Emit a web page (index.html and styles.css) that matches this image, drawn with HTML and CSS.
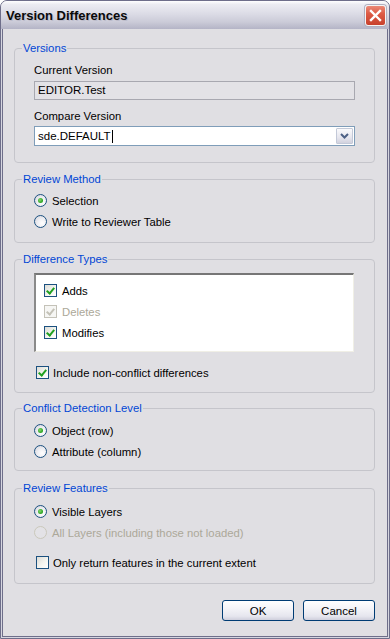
FILE: index.html
```html
<!DOCTYPE html>
<html lang="en">
<head>
    <meta charset="UTF-8">
    <meta name="viewport" content="width=device-width, initial-scale=1.0">
    <title>Version Differences</title>
    <link rel="stylesheet" href="styles.css">
</head>
<body>
    <div class="window">
        <div class="titlebar">
            <span class="title">Version Differences</span>
            <span class="close-btn">
                <svg width="13" height="13" viewBox="0 0 13 13"><path d="M2 2 L11 11 M11 2 L2 11" stroke="#fff" stroke-width="2.4" stroke-linecap="square"/></svg>
            </span>
        </div>
        <div class="client">
            <fieldset class="group group-versions">
                <legend>Versions</legend>
                <div class="label first">Current Version</div>
                <div class="textbox readonly">EDITOR.Test</div>
                <div class="label">Compare Version</div>
                <div class="combo">
                    <span class="combo-text">sde.DEFAULT<span class="caret"></span></span>
                    <span class="combo-btn">
                        <svg width="9" height="6" viewBox="0 0 9 6"><path d="M1 1 L4.5 4.5 L8 1" stroke="#4d6185" stroke-width="2" fill="none"/></svg>
                    </span>
                </div>
            </fieldset>

            <fieldset class="group group-method">
                <legend>Review Method</legend>
                <div class="row"><span class="radio checked"></span>Selection</div>
                <div class="row"><span class="radio"></span>Write to Reviewer Table</div>
            </fieldset>

            <fieldset class="group group-types">
                <legend>Difference Types</legend>
                <div class="listbox">
                    <div class="row item"><span class="check small on"></span>Adds</div>
                    <div class="row item disabled"><span class="check small on dis"></span>Deletes</div>
                    <div class="row item"><span class="check small on"></span>Modifies</div>
                </div>
                <div class="row include"><span class="check on"></span>Include non-conflict differences</div>
            </fieldset>

            <fieldset class="group group-conflict">
                <legend>Conflict Detection Level</legend>
                <div class="row"><span class="radio checked"></span>Object (row)</div>
                <div class="row"><span class="radio"></span>Attribute (column)</div>
            </fieldset>

            <fieldset class="group group-features">
                <legend>Review Features</legend>
                <div class="row"><span class="radio checked"></span>Visible Layers</div>
                <div class="row disabled"><span class="radio dis"></span>All Layers (including those not loaded)</div>
                <div class="row extent"><span class="check"></span>Only return features in the current extent</div>
            </fieldset>

            <div class="buttons">
                <span class="button">OK</span>
                <span class="button">Cancel</span>
            </div>
        </div>
    </div>
</body>
</html>
```

FILE: styles.css
```css
html, body {
    margin: 0;
    padding: 0;
    background: #ffffff;
}
body {
    font-family: "Liberation Sans", Arial, sans-serif;
    font-size: 11.3px;
    color: #000;
}
.window {
    width: 390px;
    height: 639px;
    box-sizing: border-box;
    display: flex;
    flex-direction: column;
    border: 1px solid #6e6e8a;
    border-radius: 7px 7px 0 0;
    background: #d6d6e0;
    overflow: hidden;
}
.titlebar {
    height: 28px;
    flex: none;
    display: flex;
    align-items: center;
    justify-content: space-between;
    padding: 0 3px 0 5px;
    background: linear-gradient(to bottom, #ffffff 0%, #ececf2 12%, #dcdce6 45%, #cbcbd8 75%, #b4b4c6 100%);
}
.title {
    font-size: 13px;
    font-weight: bold;
    color: #0a0a0a;
    text-shadow: 1px 1px 0 #bcbcca;
    padding-top: 1px;
}
.close-btn {
    width: 19px;
    height: 19px;
    border: 1px solid #f4f4f4;
    border-radius: 3px;
    background: linear-gradient(to bottom, #eb8a78 0%, #dd5c46 40%, #c8402c 100%);
    display: flex;
    align-items: center;
    justify-content: center;
    box-shadow: 0 0 0 1px #b0b0c0;
    margin-top: 1px;
}
.client {
    flex: 1;
    margin: 0 1px 1px;
    border: 1px solid #6e6e8a;
    border-top: none;
    background: #e0dfe3;
    padding: 13px 12px 0 11px;
}
.group {
    margin: 10px 0 0;
    padding: 0 0 0 7px;
    border: 1px solid #c5c5cb;
    border-radius: 4px;
    min-inline-size: 0;
}
.group > :not(legend) {
    margin-left: 12px;
}
.group legend {
    color: #0046d5;
    line-height: 13px;
    padding: 0 1px;
}
.group-versions {
    margin-top: 0;
    padding-right: 19px;
    padding-bottom: 16px;
}
.group-method {
    padding-top: 4px;
    padding-bottom: 10px;
}
.group-types {
    padding-top: 7px;
    padding-right: 20px;
    padding-bottom: 9px;
}
.group-conflict {
    margin-top: 9px;
    padding-top: 5px;
    padding-bottom: 8px;
}
.group-features {
    margin-top: 11px;
    padding-top: 6px;
    padding-bottom: 10px;
}
.label {
    line-height: 14px;
    margin-top: 9px;
}
.label.first {
    margin-top: 8px;
}
.textbox {
    height: 19px;
    box-sizing: border-box;
    margin-top: 4px;
    padding: 0 3px;
    line-height: 17px;
    font-size: 11.5px;
}
.readonly {
    border: 1px solid #a8a8b0;
    background: #e3e2e6;
}
.combo {
    height: 20px;
    box-sizing: border-box;
    margin-top: 3px;
    border: 1px solid #7f9db9;
    background: #fff;
    display: flex;
    align-items: stretch;
}
.combo-text {
    flex: 1;
    padding-left: 3px;
    line-height: 18px;
    font-size: 11.5px;
    display: flex;
    align-items: center;
}
.caret {
    display: inline-block;
    width: 1px;
    height: 13px;
    background: #000;
    margin-left: 1px;
}
.combo-btn {
    width: 15px;
    margin: 1px;
    border: 1px solid #c3c9d8;
    border-radius: 1px;
    background: linear-gradient(to bottom, #fafafc 0%, #e6e6ee 60%, #d2d2de 100%);
    display: flex;
    align-items: center;
    justify-content: center;
}
.row {
    height: 21px;
    display: flex;
    align-items: center;
}
.radio {
    width: 11px;
    height: 11px;
    border: 1px solid #1c5180;
    border-radius: 50%;
    background: radial-gradient(circle at 65% 65%, #ffffff 0%, #eeeef2 45%, #cfcfd8 100%);
    margin-right: 5px;
    position: relative;
    flex: none;
}
.radio.checked::after {
    content: "";
    position: absolute;
    left: 3px;
    top: 3px;
    width: 5px;
    height: 5px;
    border-radius: 50%;
    background: radial-gradient(circle at 40% 40%, #86d86e 0%, #32a828 60%, #1e8a1e 100%);
}
.radio.dis {
    border-color: #cac8bb;
    background: #e3e2e6;
}
.disabled {
    color: #aca899;
}
.check {
    width: 11px;
    height: 11px;
    border: 1px solid #1c5180;
    background: linear-gradient(135deg, #dcdcd6 0%, #f4f4f0 55%, #ffffff 100%);
    margin-right: 4px;
    margin-left: 2px;
    position: relative;
    flex: none;
}
.check.on::after {
    content: "";
    position: absolute;
    left: 3px;
    top: 1px;
    width: 3px;
    height: 6px;
    border: solid #21a121;
    border-width: 0 2px 2px 0;
    transform: rotate(40deg);
}
.check.dis {
    border-color: #c4c2b8;
    background: #f6f6f4;
}
.check.dis::after {
    border-color: #c4c2b8;
}
.check.small {
    margin-left: 8px;
    margin-right: 5px;
}
.listbox {
    height: 79px;
    box-sizing: border-box;
    background: #fff;
    border-style: solid;
    border-width: 2px 1px 1px 2px;
    border-color: #767676 #f0efe6 #f0efe6 #8a8a8a;
    padding-top: 5px;
}
.include {
    margin-top: 10px;
}
.extent {
    margin-top: 9px;
}
.buttons {
    display: flex;
    justify-content: flex-end;
    gap: 9px;
    margin-top: 16px;
}
.button {
    width: 72px;
    height: 21px;
    box-sizing: border-box;
    border: 1px solid #003c74;
    border-radius: 3px;
    background: linear-gradient(to bottom, #ffffff 0%, #f4f4f8 40%, #e6e6ee 80%, #cfcfdc 100%);
    display: flex;
    align-items: center;
    justify-content: center;
    font-size: 11.5px;
}
```
